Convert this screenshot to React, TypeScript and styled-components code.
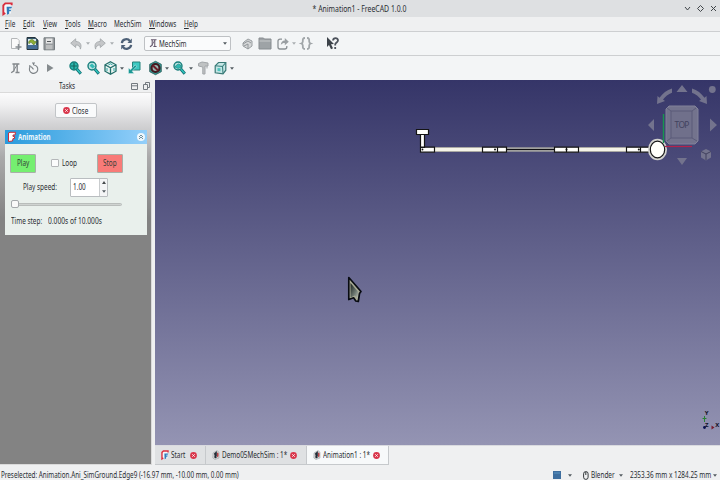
import React from 'react';
import styled, { createGlobalStyle } from 'styled-components';

const Global = createGlobalStyle`
  * { box-sizing: border-box; }
  body { margin: 0; overflow: hidden; font-family: "Noto Sans", "Open Sans", sans-serif; font-size: 8px; color: #292d31; }
  svg { display: block; flex: none; overflow: visible; }
`;
const Window = styled.div`width: 720px; height: 480px; display: flex; flex-direction: column; background: #eff0f1;`;
const TitleBar = styled.header`height: 17px; display: grid; grid-template-columns: 60px 1fr 60px; align-items: center; background: #dee0e2; padding: 0 3px 0 2px;`;
const LabelBox = styled.span<{ $w: number }>`display: block; flex: none; width: ${p => p.$w}px; line-height: 12px; white-space: nowrap;`;
const Condensed = styled.span<{ $s: number }>`display: inline-block; transform: scaleX(${p => p.$s}); transform-origin: left center;`;
const Title = styled.span`text-align: center; line-height: 12px; transform: scaleX(.86);`;
const Label = ({ w, s = .8, children }: { w: number; s?: number; children: React.ReactNode }) => <LabelBox $w={w}><Condensed $s={s}>{children}</Condensed></LabelBox>;
const Controls = styled.div`display: flex; gap: 6px; justify-content: flex-end;`;
const Menu = styled.nav`height: 14px; display: flex; align-items: center; padding-left: 5px;`;
const Key = styled.span`text-decoration: underline; text-underline-offset: 1px;`;
const ToolRow = styled.div<{ $h: number }>`height: ${p => p.$h}px; display: flex; align-items: center; border-top: 1px solid #cdcfd1; padding-left: 10px; background: #f3f5f6;`;
const Slot = styled.div<{ $w: number }>`width: ${p => p.$w}px; flex: none; display: flex; align-items: center;`;
const Combo = styled.div`width: 87px; height: 15px; margin-left: -1px; border: 1px solid #bec1c4; border-radius: 2px; background: #fafbfc; display: flex; align-items: center; padding: 0 3px 0 4px; gap: 2px;`;
const Spring = styled.div`flex: 1;`;
const Main = styled.main`height: 385px; display: flex;`;
const Dock = styled.aside`width: 155px; display: flex; flex-direction: column; padding-right: 3px;`;
const DockHead = styled.div`height: 12px; display: flex; align-items: center; padding: 0 2px 0 59px; gap: 5px;`;
const DockBody = styled.div`flex: 1; background: linear-gradient(#fbfbfc 0, #f0f0f1 12px, #d6d6d8 29px, #aaa 64px, #838383 125px, #838383); border: 1px solid #dadada; border-left: 0; display: flex; flex-direction: column;`;
const CloseButton = styled.button`margin: 10px 0 0 55px; width: 42px; height: 15px; padding: 0 0 0 7px; border: 1px solid #c2c5c8; border-radius: 2px; background: #f9fafb; display: flex; gap: 2px; align-items: center; font: inherit; color: inherit; text-align: left;`;
const TaskBox = styled.section`margin: 12px 0 0 5px; width: 142px; height: 105px; background: #e9f0ec;`;
const TaskHead = styled.div`height: 14px; background: linear-gradient(90deg, #299bdc, #93cffa); display: flex; align-items: center; padding: 0 2px 0 3px; gap: 2px; color: #edf7fc; font-weight: 700;`;
const FormRow = styled.div<{ $h: number; $l?: number }>`height: ${p => p.$h}px; padding-left: ${p => p.$l ?? 5}px; display: flex; align-items: center;`;
const Action = styled.button<{ $c: string }>`width: 26px; height: 19px; padding: 0; display: flex; align-items: center; justify-content: center; text-align: left; border: 1px solid #a8b0a8; border-radius: 1px; background: ${p => p.$c}; font: inherit; color: #344039;`;
const Check = styled.span`width: 8px; height: 8px; border: 1px solid #b4b7b9; border-radius: 1px; background: #fbfcfc; margin: 0 3px 0 15px;`;
const Spin = styled.div`width: 38px; height: 19px; border: 1px solid #b9bdc0; border-radius: 1px; background: white; display: flex; align-items: center; justify-content: space-between; padding-left: 2px;`;
const Steppers = styled.div`width: 8px; height: 17px; border-left: 1px solid #c9ccce; background: #f4f5f6; display: flex; flex-direction: column; align-items: center; justify-content: space-around;`;
const Track = styled.div`width: 111px; height: 3px; border: 1px solid #b9bdbb; border-radius: 2px; background: #cfd3d1; display: flex; align-items: center;`;
const Thumb = styled.span`width: 8px; height: 8px; flex: none; margin-left: -1px; border: 1px solid #a6aaad; border-radius: 2px; background: #fafafa;`;
const Workspace = styled.section`width: 565px; display: flex; flex-direction: column;`;
const Viewport = styled.div`height: 365px; background: linear-gradient(#353568, #9494b3); overflow: hidden;`;
const Tabs = styled.div`height: 20px; display: flex; align-items: flex-start; border-top: 1px solid #d9dadf;`;
const Tab = styled.div<{ $w: number; $on?: boolean }>`width: ${p => p.$w}px; height: 19px; display: flex; align-items: center; gap: 2px; padding-left: 6px; background: ${p => (p.$on ? '#f7f9fa' : '#dfe1e3')}; border: solid #c6c9cc; border-width: 0 1px 1px 0;`;
const Status = styled.footer`height: 15px; display: flex; align-items: center; padding: 5px 0 0 1px;`;

const Arrow = ({ light }: { light?: boolean }) => <svg width="4" height="3" viewBox="0 0 4 3"><path d="M0 .3h4L2 2.8z" fill={light ? '#aaaeb1' : '#555c62'} /></svg>;
const Red = () => <svg width="7" height="7" viewBox="0 0 7 7"><circle cx="3.5" cy="3.5" r="3.4" fill="#d9364b" /><path d="m2.2 2.2 2.6 2.6m0-2.6L2.2 4.8" stroke="#fff" strokeWidth=".8" /></svg>;
const Logo = ({ s = 10 }: { s?: number }) => <svg width={s} height={s * 1.2} viewBox="0 0 10 12"><path d="M1.2 3 3 1h6v2L8 10.5 1.2 11.5z" fill="#f5f8fc" /><path d="M8.8 3V1.2H3L1.2 3v8.2L3 10" fill="none" stroke="#d92e3e" strokeWidth="1.7" /><path d="M4.2 4.3h5L8.4 6H6.5v1h2l-.7 1.5H6.5v2.2l-2 .8z" fill="#317dbb" /></svg>;
const TaskLogo = () => <svg width="8" height="10" viewBox="0 0 8 10"><path d="M.5 1 2 .3h5.5L7 3H5v1.5h1.5v2H5L4.5 9 .5 9.5z" fill="#fff" stroke="#ca2e3b" strokeWidth="1" /></svg>;
const MechDoc = () => <svg width="8" height="10" viewBox="0 0 8 10"><path d="M1 3 5 .5l2 1.7V8L3 9.6.8 8z" fill="#d5d6d6" stroke="#93999d" strokeWidth=".5" /><path d="M2 3.5 4.8 1v4.3L3 7.2z" fill="#222c37" /><path d="m5 2.6 1.5.6v3L5 7.3z" fill="#b94246" /><circle cx="3.5" cy="7" r="1.2" fill="#222d38" /></svg>;
const Mech = ({ color = '#82878b', s = 10 }: { color?: string; s?: number }) => <svg width={s} height={s * 1.1} viewBox="0 0 10 11"><g fill="none" stroke={color}><path d="M2.4 1h7M4 1v6.8L1.2 9.7M7.2 1v8M5.5 9.5h4" strokeWidth="1.3" /><path d="m3.8 7.4 3.4-5.7" /></g></svg>;

const NewDoc = () => <svg width="12" height="14" viewBox="0 0 12 14"><path d="M1.5 1.5h5.7l2 2v8H1.5z" fill="#fafafa" stroke="#b4b7b9" /><path d="M8.5 7v6M5.5 10h6" stroke="#888e92" strokeWidth="1.5" /></svg>;
const OpenDoc = () => <svg width="12" height="14" viewBox="0 0 12 14"><path d="M0 .5h8l3 2.7v9.3H0z" fill="#34576a" stroke="#25333c" /><path d="M1 2h8v6H1z" fill="#dce9ef" /><path d="M1.5 5c2.5-3.5 5-3 5.8-.4h2.5L6.8 8 4 5.2C3 5 3 6 2 6.8z" fill="#8dad35" stroke="#4a6818" strokeWidth=".5" /><path d="M.5 8h10v4H.5z" fill="#456c94" /></svg>;
const Save = () => <svg width="12" height="14" viewBox="0 0 12 14"><path d="M0 .8h10.5v12H0z" fill="#989c9f" stroke="#767c80" /><path d="M2 1.5h6.5v5H2z" fill="#e4e5e5" /><path d="M3 4.5h4m-5 5h6" stroke="#55595d" /><path d="M2 8h6.5v4.3H2z" fill="#bcbebf" /></svg>;
const Undo = ({ redo }: { redo?: boolean }) => <svg width="12" height="12" viewBox="0 0 12 12"><path transform={redo ? 'translate(12) scale(-1 1)' : undefined} d="M.7 5.2 5.7.8v2.6c4.7.3 6.3 3.1 4.7 7.7-.2-2.7-1.8-4.2-4.7-4.1v2.5z" fill="#c4c6c8" stroke="#a0a4a7" strokeWidth=".8" /></svg>;
const Refresh = () => <svg width="13" height="14" viewBox="0 0 14 14"><g fill="none" stroke="#4d6077" strokeWidth="2.4"><path d="M2 6c.4-4.6 6.5-5.4 8.6-2.2M12 8c-.5 4.5-6.5 5.5-8.7 2.3" /></g><path d="m12.8 1-.2 5H8zM1.2 13l.2-5H6z" fill="#4d6077" /></svg>;
const Zoom = ({ fit, drop }: { fit?: boolean; drop?: boolean }) => <svg width="13" height="14" viewBox="0 0 13 14"><path d="m7.8 8 4 4.7" stroke="#126b70" strokeWidth="3" /><path d="m7.8 8 3.7 4.3" stroke="#2ec4bd" strokeWidth="1.5" /><circle cx="5" cy="5" r="4" fill={fit ? '#2bb9b0' : '#bce3e2'} stroke="#167e7b" strokeWidth="1.4" />{fit && <path d="M5 2v6M2 5h6" stroke="#17665f" strokeWidth="1.2" />}{!fit && (drop ? <path d="m2.5 5 2.8-2L8 4.3v2L5.2 7.5 2.5 6.4z" fill="#2fb9b2" stroke="#208984" strokeWidth=".7" /> : <path d="M2.5 4.5 5 2.5l3 3-2.5 2z" fill="#35bab5" />)}</svg>;
const Cube = ({ blue }: { blue?: boolean }) => <svg width="13" height="14" viewBox="0 0 13 14">{blue ? <><path d="M1.2 4.8 4.5 1.5h7.3v7.7L9 12.8l-7.8-1z" fill="#c5e6e5" stroke="#397875" strokeWidth="1.2" /><path d="m1.2 4.8 7.3.7.5 7M8.5 5.5l3.3-4" fill="none" stroke="#38817e" strokeWidth="1.1" /><path d="m3.5 7 3 .3v3l-3-.4z" fill="#4fc4be" /></> : <><path d="m6.5.8 5.5 3v6.4l-5.5 3-5.5-3V3.8zM1 3.8l5.5 2.9L12 3.8M6.5 6.7v6.5" fill="#eaf4f2" stroke="#236f6b" strokeWidth="1.3" /><path d="m4.3 4 2.2-1.2 2 1.1M3 7v3m7-3v3" stroke="#28aaa5" fill="none" /></>}</svg>;
const Select = () => <svg width="13" height="14" viewBox="0 0 13 14"><path d="M4.5 1H12v8H4.5z" fill="#3bc9c2" stroke="#24827b" /><path d="M8.8 5.3 4.2 10.2 6 12.5H.5V7l2 1.8 4.6-4.9z" fill="#199795" stroke="#d7efed" strokeWidth=".5" /></svg>;
const Block = () => <svg width="13" height="14" viewBox="0 0 13 14"><path d="m6.5.3 5.8 3v7.4l-5.8 3-5.8-3V3.3z" fill="#369a94" stroke="#245855" strokeWidth=".8" /><circle cx="6.5" cy="7" r="4" fill="#9ab8b2" stroke="#421920" strokeWidth="2.2" /><path d="m3.7 4.2 5.6 5.6" stroke="#6e1d28" strokeWidth="2" /></svg>;
const Stopwatch = () => <svg width="11" height="13" viewBox="0 0 11 13"><path d="M2 5A4.2 4.2 0 1 0 5.5 3M5.5 3V1M4 1h3M5.5 7.4 3.2 4.7" fill="none" stroke="#7c8286" strokeWidth="1.1" /><path d="m1 3 .4 3 2-2z" fill="#7c8286" /></svg>;
const Measure = () => <svg width="11" height="14" viewBox="0 0 11 14"><path d="M.5 2.5 4 1l6 1v3H7v8H4.8V6L.5 5z" fill="#bfc2c3" stroke="#a2a6a9" /><path d="M9 5v2.5" stroke="#a2a6a9" /></svg>;
const Part = () => <svg width="11" height="13" viewBox="0 0 11 13"><path d="m2 5 4-3 4 2v5l-4 3-5-3V6z" fill="#d5d7d8" stroke="#999ea1" /><path d="m1 7 5-3 3 2M2 9l4-2v5" fill="none" stroke="#92979a" /></svg>;
const Folder = () => <svg width="13" height="13" viewBox="0 0 13 13"><path d="M0 1h4.5l1 1H12v10H0z" fill="#9ea3a6" stroke="#878c90" /><path d="M.5 4h11" stroke="#c6c9ca" /></svg>;
const Link = () => <svg width="12" height="13" viewBox="0 0 12 13"><path d="M5 2.2H3C1.7 2.2 1 3 1 4.1V10c0 1.2.7 2 2 2h4.8c1.2 0 2-.8 2-2V9" fill="none" stroke="#8c9195" strokeWidth="1.3" /><path d="M3.8 8c.2-3 1.7-4.4 4-4.5V1l4 3.7-4 3.5V6C6 6 5 6.6 3.8 8z" fill="#9a9fa2" /></svg>;
const Braces = () => <svg width="12" height="13" viewBox="0 0 12 13"><path d="M5 1C2.7 1 2.8 2.2 2.8 4.5c0 1-.4 1.6-1.5 2 1.1.4 1.5 1 1.5 2C2.8 10.8 2.7 12 5 12M7 1c2.3 0 2.2 1.2 2.2 3.5 0 1 .4 1.6 1.5 2-1.1.4-1.5 1-1.5 2C9.2 10.8 9.3 12 7 12" fill="none" stroke="#a1a6a9" strokeWidth="1.8" /></svg>;
const Help = () => <svg width="14" height="14" viewBox="0 0 14 14"><path d="m1 0 7 7-3 .2 2 4-2 1L3 8 1 10z" fill="#3c4249" /><path d="M7 3.5C7.3.4 12 .5 12 3.3c0 2.1-2.7 2.1-2.8 4.2v1M9.2 10v2" fill="none" stroke="#4d535c" strokeWidth="1.8" /></svg>;

const menus = [['File', 18], ['Edit', 20], ['View', 22], ['Tools', 23], ['Macro', 26], ['MechSim', 35], ['Windows', 35], ['Help', 20]] as const;
const dockIcon = { fill: 'none', stroke: '#747a80' };

function Scene() {
  return <svg width="565" height="365" viewBox="155 80 565 365">
    <g fill="none">
      <path d="M434 149.5h49m96 0h49" strokeWidth="5" stroke="#aaa9a4" /><path d="M434 149.5h49m96 0h49" strokeWidth="3" stroke="#f5f4e8" />
      <path d="M506 149.5h49" strokeWidth="4.5" stroke="#a0a09e" /><path d="M506 149.5h49" strokeWidth="1.2" stroke="#101015" />
    </g>
    <g fill="#fffffb" stroke="#141414" strokeWidth="1.2">
      <path d="M416.5 129.5h12v5h-12zM420.5 134.5h4v13h-4zM420.5 147.2h14v5h-14zM482.5 147.2h24v5h-24zM554.5 147.2h24v5h-24zM626.5 147.2h24v5h-24z" />
      <path d="M497.5 147.2v5M566.5 147.2v5M640.5 147.2v5" /><ellipse cx="657.5" cy="149.5" rx="7.8" ry="9" strokeWidth="3.5" stroke="#d2d2cf" /><ellipse cx="657.5" cy="149.5" rx="7.2" ry="8.4" />
    </g>
    <g fill="#111"><circle cx="422.5" cy="149.5" r=".9" /><circle cx="495" cy="149.5" r="1" /><circle cx="566.5" cy="149.5" r="1" /><circle cx="638.8" cy="149.5" r="1" /></g>
    <g fill="#73738d">
      <path d="m682 85 5.5 7h-11zm0 80 5-7h-10zM648 125l6-6v12zM717 125l-7-6.5v13z" />
      <path d="m657 104 .5-8 2 1.7c3.2-4.3 7.2-7.5 12.5-9.2v4.2c-3.7 1.4-6.8 3.8-9 6.9l2 1.5zM707 104l-.5-8-2 1.7c-3.2-4.3-7.2-7.5-12.5-9.2v4.2c3.7 1.4 6.8 3.8 9 6.9l-2 1.5z" />
      <circle cx="712.3" cy="89.5" r="3.4" /><path d="m706 149 5 2.5v6l-5 3-5-3v-6z" />
      <path d="m701 151.5 5 2.5 5-2.5M706 154v6" stroke="#41415f" fill="none" />
      <path d="M669 106h26l3 3v32l-3 3h-26l-3-3v-32z" stroke="#82829a" strokeWidth="1" />
    </g>
    <path d="M671 111h21v27h-21zm-4-3 4 3m25-3-4 3m5 30-5-3m-25 3 4-3" fill="#70708b" stroke="#5b5b79" />
    <text x="682" y="128" textAnchor="middle" fontFamily="Noto Sans" fontSize="8.5" textLength="15" fill="#42425e">TOP</text>
    <path d="M663.5 114v29" stroke="#16964f" strokeWidth="1.4" /><path d="M665 146.5h27" stroke="#b4234c" strokeWidth="1.2" />
    <defs><linearGradient id="cursor" x1="0" y1="0" x2="1" y2="1"><stop stopColor="#18201d" /><stop offset=".65" stopColor="#758079" /><stop offset="1" stopColor="#c1c4b6" /></linearGradient></defs>
    <path d="M348.8 277.5 361 291.5l-1.5 2-1.2 8-2.5-.5-2.2-3.2-4.8 1.7z" fill="#a8aa94" stroke="#080b12" strokeWidth="1.7" strokeLinejoin="round" />
    <path d="m350.5 283 7.8 9-.7 6.5-3-3-4 2z" fill="url(#cursor)" />
    <g fontFamily="Noto Sans" fontSize="6" fontWeight="700" fill="#121226"><text x="704.8" y="414.5">Y</text><text x="705" y="427">Z</text><text x="715.3" y="427">X</text></g>
    <path d="M704.5 416v6m-2-3.5h4" stroke="#278134" /><path d="M711.5 425.5v4l3-2z" fill="#781b2b" /><circle cx="704.5" cy="427.5" r="1.4" fill="#07104f" />
  </svg>;
}

export default function App() {
  return <><Global /><Window>
    <TitleBar><Logo s={11} /><Title>* Animation1 - FreeCAD 1.0.0</Title><Controls>
      <svg width="7" height="7" viewBox="0 0 7 7"><path d="m1 2 2.5 3L6 2" fill="none" stroke="#41464a" /></svg><svg width="7" height="7" viewBox="0 0 7 7"><path d="m3.5.5 3 3-3 3-3-3z" fill="none" stroke="#41464a" /></svg><svg width="7" height="7" viewBox="0 0 7 7"><path d="m1 1 5 5m0-5L1 6" stroke="#41464a" /></svg>
    </Controls></TitleBar>
    <Menu>{menus.map(([name, w]) => <Label key={name} w={w}>{name === 'MechSim' ? name : <><Key>{name[0]}</Key>{name.slice(1)}</>}</Label>)}</Menu>
    <ToolRow $h={24}>
      <Slot $w={17}><NewDoc /></Slot><Slot $w={17}><OpenDoc /></Slot><Slot $w={26}><Save /></Slot>
      <Slot $w={16}><Undo /></Slot><Slot $w={8}><Arrow light /></Slot><Slot $w={16}><Undo redo /></Slot><Slot $w={10}><Arrow light /></Slot><Slot $w={25}><Refresh /></Slot>
      <Combo><Mech s={8} color="#65576c" /><Label w={28}>MechSim</Label><Spring /><Arrow /></Combo>
      <Slot $w={11} /><Slot $w={17}><Part /></Slot><Slot $w={18}><Folder /></Slot><Slot $w={15}><Link /></Slot><Slot $w={8}><Arrow light /></Slot><Slot $w={26}><Braces /></Slot><Help />
    </ToolRow>
    <ToolRow $h={25}>
      <Slot $w={18}><Mech /></Slot><Slot $w={18}><Stopwatch /></Slot><Slot $w={23}><svg width="8" height="10" viewBox="0 0 8 10"><path d="M1 1v8l6.5-4z" fill="#858b8e" /></svg></Slot>
      <Slot $w={18}><Zoom fit /></Slot><Slot $w={17}><Zoom /></Slot><Slot $w={16}><Cube /></Slot><Slot $w={8}><Arrow /></Slot><Slot $w={21}><Select /></Slot>
      <Slot $w={16}><Block /></Slot><Slot $w={8}><Arrow /></Slot><Slot $w={16}><Zoom drop /></Slot><Slot $w={9}><Arrow /></Slot><Slot $w={16}><Measure /></Slot><Slot $w={16}><Cube blue /></Slot><Arrow />
    </ToolRow>
    <Main><Dock><DockHead><Label w={17}>Tasks</Label><Spring /><svg width="7" height="7" viewBox="0 0 7 7"><path d="M.5.5h6v6h-6zM1 2.8h5" {...dockIcon} /></svg><svg width="7" height="8" viewBox="0 0 7 8"><path d="M2.5 2.5v-2h4v5h-2M.5 2.5h4v5h-4z" {...dockIcon} /></svg></DockHead>
      <DockBody><CloseButton><Red /><Label w={16}>Close</Label></CloseButton>
        <TaskBox><TaskHead><TaskLogo /><Label w={34} s={.78}>Animation</Label><Spring /><svg width="8" height="8" viewBox="0 0 8 8"><circle cx="4" cy="4" r="4" fill="#eef7fc" /><path d="m2 4 2-2 2 2M2 6l2-2 2 2" fill="none" stroke="#718f9d" /></svg></TaskHead>
          <FormRow $h={38}><Action $c="#75ef70"><Label w={13}>Play</Label></Action><Check /><Label w={35}>Loop</Label><Action $c="#f87b78"><Label w={14}>Stop</Label></Action></FormRow>
          <FormRow $h={10} $l={18}><Label w={47}>Play speed:</Label><Spin><Label w={15}>1.00</Label><Steppers><svg width="4" height="3"><path d="M0 3h4L2 0z" fill="#45494c" /></svg><Arrow /></Steppers></Spin></FormRow>
          <FormRow $h={24} $l={6}><Track><Thumb /></Track></FormRow>
          <FormRow $h={9} $l={6}><Label w={37}>Time step:</Label><Label w={54} s={.83}>0.000s of 10.000s</Label></FormRow>
        </TaskBox></DockBody></Dock>
      <Workspace><Viewport><Scene /></Viewport><Tabs>
        <Tab $w={51}><Logo s={8} /><Label w={17}>Start</Label><Red /></Tab><Tab $w={101}><MechDoc /><Label w={66}>Demo05MechSim : 1*</Label><Red /></Tab><Tab $w={82} $on><MechDoc /><Label w={48}>Animation1 : 1*</Label><Red /></Tab>
      </Tabs></Workspace></Main>
    <Status><Label w={240} s={.79}>Preselected: Animation.Ani_SimGround.Edge9 (-16.97 mm, -10.00 mm, 0.00 mm)</Label><Spring />
      <Slot $w={15}><svg width="8" height="8"><path d="M0 0h8v8H0z" fill="#3e6e9e" /><path d="M1 1h6v2H1z" fill="#4c81b0" /></svg></Slot><Slot $w={15}><Arrow /></Slot><Slot $w={8}><svg width="6" height="9" viewBox="0 0 6 9"><rect x=".6" y=".6" width="4.5" height="7.8" rx="2.2" fill="none" stroke="#34393c" /><path d="M2.8 1v3" stroke="#34393c" /></svg></Slot><Label w={28}>Blender</Label><Slot $w={11}><Arrow /></Slot><Label w={83}>2353.36 mm x 1284.25 mm</Label><Slot $w={7}><Arrow /></Slot>
    </Status>
  </Window></>;
}
